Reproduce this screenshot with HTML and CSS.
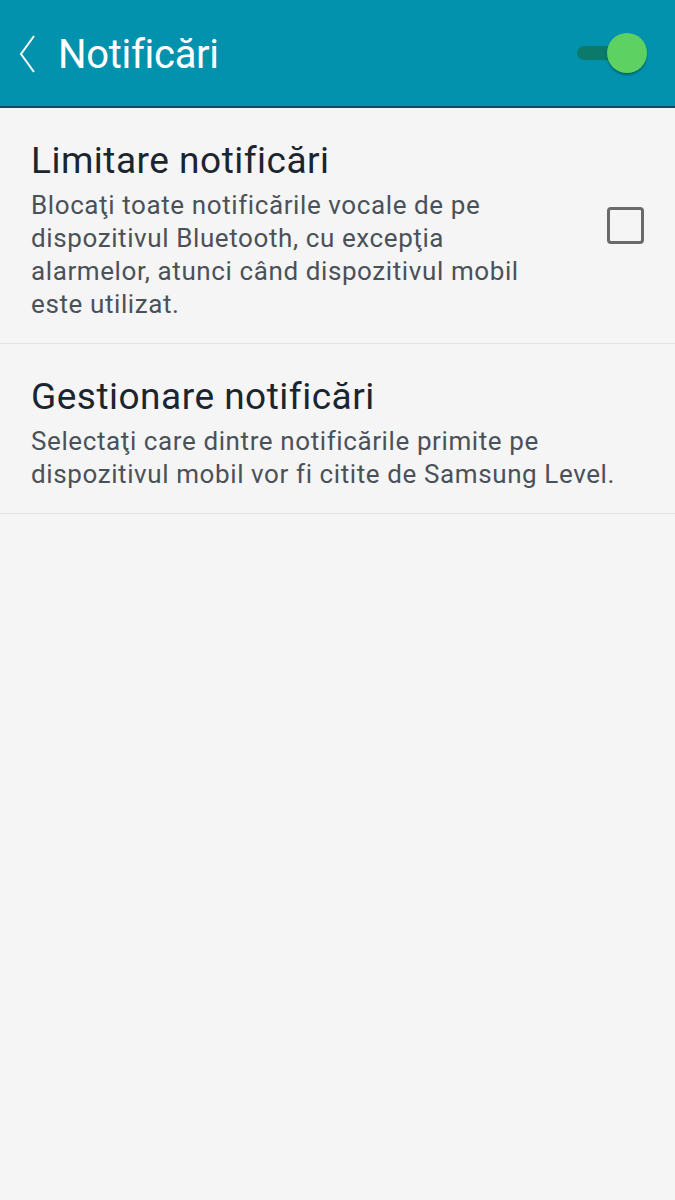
FILE: index.html
```html
<!DOCTYPE html>
<html lang="ro">
<head>
    <meta charset="UTF-8">
    <meta name="viewport" content="width=device-width, initial-scale=1.0">
    <title>Notificări</title>
    <link rel="stylesheet" href="styles.css">
</head>
<body>
    <header class="topbar">
        <div class="topbar-left">
            <svg class="back" width="18" height="40" viewBox="0 0 18 40">
                <polyline points="16,2 3,20 16,38" fill="none" stroke="#ffffff" stroke-width="2"/>
            </svg>
            <h1 class="title">Notificări</h1>
        </div>
        <div class="switch">
            <span class="switch-track"></span>
            <span class="switch-thumb"></span>
        </div>
    </header>

    <main class="list">
        <div class="item item-check">
            <div class="item-text">
                <h2 class="item-title">Limitare notificări</h2>
                <p class="item-desc">Blocaţi toate notificările vocale de pe dispozitivul Bluetooth, cu excepţia alarmelor, atunci când dispozitivul mobil este utilizat.</p>
            </div>
            <span class="checkbox"></span>
        </div>
        <div class="item">
            <div class="item-text">
                <h2 class="item-title">Gestionare notificări</h2>
                <p class="item-desc">Selectaţi care dintre notificările primite pe dispozitivul mobil vor fi citite de Samsung Level.</p>
            </div>
        </div>
    </main>
</body>
</html>
```

FILE: styles.css
```css
html, body {
    margin: 0;
    padding: 0;
    background-color: #f5f5f5;
    font-family: Roboto, "Noto Sans", sans-serif;
    min-height: 100vh;
}

.topbar {
    display: flex;
    justify-content: space-between;
    align-items: center;
    height: 108px;
    background-color: #0392ad;
    border-bottom: 2px solid #0b4f5c;
    box-sizing: border-box;
    padding: 2px 28px 0 18px;
}

.topbar-left {
    display: flex;
    align-items: center;
    gap: 22px;
}

.back {
    display: block;
}

.title {
    margin: 0;
    color: #ffffff;
    font-size: 40px;
    font-weight: 400;
    letter-spacing: -0.3px;
}

.switch {
    position: relative;
    width: 70px;
    height: 44px;
}

.switch-track {
    position: absolute;
    left: 0;
    top: 14px;
    width: 42px;
    height: 14px;
    border-radius: 7px;
    background-color: #0b7a6b;
}

.switch-thumb {
    position: absolute;
    right: 0;
    top: 1px;
    width: 40px;
    height: 40px;
    border-radius: 50%;
    background-color: #5dd263;
    box-shadow: 0 2px 2px rgba(0, 60, 50, 0.5);
}

.list {
    display: flex;
    flex-direction: column;
}

.item {
    display: flex;
    align-items: center;
    gap: 62px;
    padding: 31px 31px 22px 31px;
    border-bottom: 1px solid #e2e2e2;
}

.item-text {
    flex: 1;
}

.item-title {
    margin: 0 0 6px 0;
    font-size: 37px;
    line-height: 44px;
    font-weight: 400;
    color: #1b2530;
    letter-spacing: 0.5px;
}

.item-desc {
    margin: 0;
    font-size: 26px;
    line-height: 33px;
    color: #4b5159;
    letter-spacing: 0.6px;
}

.checkbox {
    flex: none;
    width: 31px;
    height: 31px;
    border: 3px solid #6a6a6a;
    border-radius: 4px;
    margin-top: -10px;
}
```
